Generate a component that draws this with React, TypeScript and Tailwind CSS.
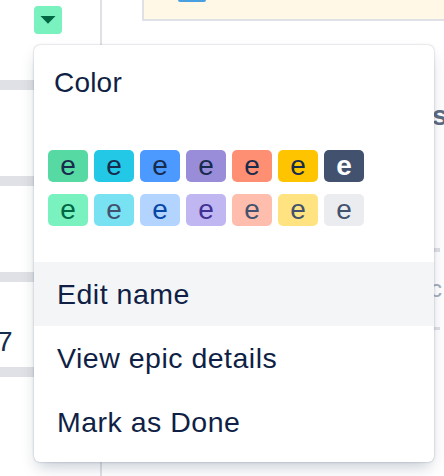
import React from "react";

type Swatch = { bg: string; fg: string; bold?: boolean };

const strongColors: Swatch[] = [
  { bg: "bg-[#57D9A3]", fg: "text-[#172B4D]" },
  { bg: "bg-[#23C8E6]", fg: "text-[#172B4D]" },
  { bg: "bg-[#4C9AFF]", fg: "text-[#172B4D]" },
  { bg: "bg-[#998DD9]", fg: "text-[#172B4D]" },
  { bg: "bg-[#FF8F73]", fg: "text-[#172B4D]" },
  { bg: "bg-[#FFC400]", fg: "text-[#172B4D]" },
  { bg: "bg-[#42526E]", fg: "text-white", bold: true },
];

const softColors: Swatch[] = [
  { bg: "bg-[#79F2C0]", fg: "text-[#006644]" },
  { bg: "bg-[#79E2F2]", fg: "text-[#42526E]" },
  { bg: "bg-[#B3D4FF]", fg: "text-[#0747A6]" },
  { bg: "bg-[#C0B6F2]", fg: "text-[#403294]" },
  { bg: "bg-[#FFBDAD]", fg: "text-[#42526E]" },
  { bg: "bg-[#FFE380]", fg: "text-[#42526E]" },
  { bg: "bg-[#EBECF0]", fg: "text-[#42526E]" },
];

function SwatchRow({ items }: { items: Swatch[] }) {
  return (
    <div className="flex gap-[6px]">
      {items.map((s, i) => (
        <button
          key={i}
          className={`w-[40px] h-[32px] rounded-[5px] flex items-center justify-center text-[28px] leading-[32px] ${s.bg} ${s.fg} ${
            s.bold ? "font-bold" : "font-normal"
          }`}
        >
          e
        </button>
      ))}
    </div>
  );
}

const menuItems = ["Edit name", "View epic details", "Mark as Done"];

export default function App() {
  return (
    <div className="relative w-[444px] h-[476px] overflow-hidden bg-white font-['Liberation_Sans',Arial,sans-serif]">
      <div className="flex h-full">
        {/* epic gutter */}
        <div className="w-[100px] shrink-0 flex flex-col">
          <div className="ml-[34px] mt-[6px] w-[28px] h-[28px] rounded-[4px] bg-[#79F2C0] flex items-center justify-center">
            <svg width="16" height="8" viewBox="0 0 16 8">
              <path d="M0.5 0 H15.5 L8 7.8 Z" fill="#006644" strokeLinejoin="round" />
            </svg>
          </div>
          <div className="mt-[46px] h-[10px] bg-[#DFE1E6]" />
          <div className="mt-[86px] h-[10px] bg-[#DFE1E6]" />
          <div className="mt-[86px] h-[10px] bg-[#DFE1E6]" />
          <div className="mt-[44px] ml-[-3px] text-[28px] leading-[32px] text-[#172B4D]">7</div>
          <div className="mt-[9px] h-[10px] bg-[#DFE1E6]" />
        </div>
        <div className="w-[2px] shrink-0 bg-[#DFE1E6]" />

        {/* board area */}
        <div className="flex-1 flex flex-col min-w-0">
          <div className="ml-[40px] h-[21px] w-[400px] shrink-0 border-l-2 border-b-2 border-[#DFE1E6] bg-[#FFF8E6] pl-[34px]">
            <div className="w-[28px] h-[2px] rounded-b-[2px] bg-[#4A9FE0]" />
          </div>
          <div className="ml-[330px] flex flex-col">
            <div className="mt-[79px] text-[28px] leading-[32px] font-bold text-[#5E6C84]">s</div>
            <div className="mt-[116px] w-[8px] h-[4px] bg-[#DFE1E6]" />
            <div className="mt-[23px] ml-[-2px] text-[24px] leading-[28px] text-[#A5ADBA]">c</div>
            <div className="mt-[24px] w-[8px] h-[3px] bg-[#DFE1E6]" />
          </div>
        </div>
      </div>

      {/* epic actions dropdown */}
      <div className="absolute left-[34px] top-[45px] w-[400px] rounded-[6px] bg-white pb-[8px] shadow-[0_8px_16px_-4px_rgba(9,30,66,0.25),0_0_2px_rgba(9,30,66,0.31)]">
        <div className="pt-[22px] pl-[20px] text-[28px] leading-[32px] text-[#0F1F45] tracking-[0.2px]">Color</div>
        <div className="mt-[51px] px-[14px] flex flex-col gap-[12px]">
          <SwatchRow items={strongColors} />
          <SwatchRow items={softColors} />
        </div>
        <div className="mt-[36px] flex flex-col">
          {menuItems.map((label, i) => (
            <div
              key={label}
              className={`h-[64px] flex items-center pl-[23px] text-[28.5px] leading-[32px] text-[#0F1F45] tracking-[0.5px] ${
                i === 0 ? "bg-[#F4F5F7]" : ""
              }`}
            >
              {label}
            </div>
          ))}
        </div>
      </div>
    </div>
  );
}
